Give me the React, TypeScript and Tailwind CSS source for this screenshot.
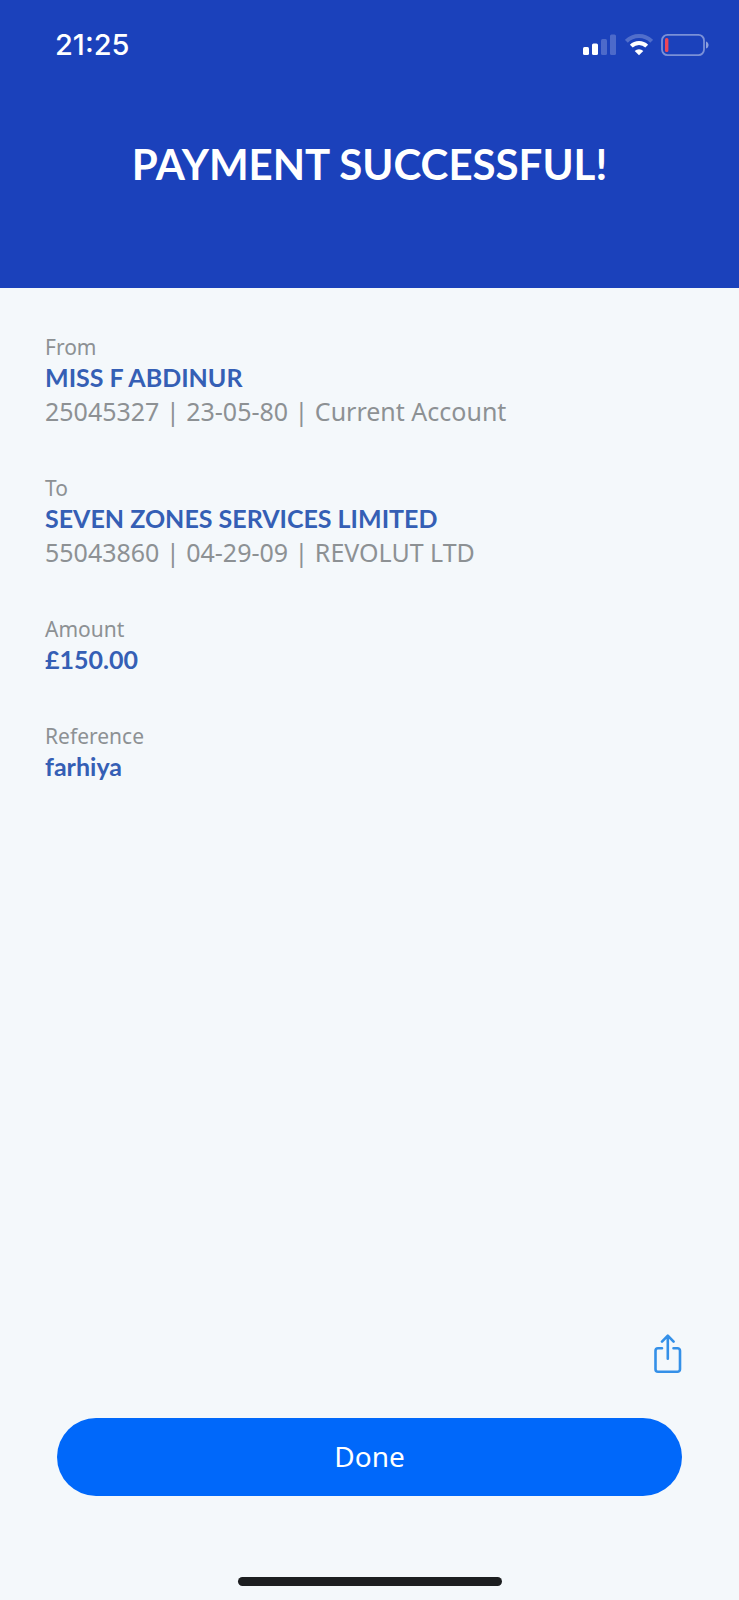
type Entry = { label: string; value: string; detail?: string };

const entries: Entry[] = [
  { label: 'From', value: 'MISS F ABDINUR', detail: '25045327 | 23-05-80 | Current Account' },
  { label: 'To', value: 'SEVEN ZONES SERVICES LIMITED', detail: '55043860 | 04-29-09 | REVOLUT LTD' },
  { label: 'Amount', value: '£150.00' },
  { label: 'Reference', value: 'farhiya' },
];

function SignalIcon() {
  return (
    <svg width="34" height="22" viewBox="0 0 34 22" fill="#fff" aria-hidden="true">
      <rect x="0" y="13" width="6" height="8" rx="1.5" />
      <rect x="9" y="9.5" width="6" height="11.5" rx="1.5" />
      <rect x="18" y="5" width="6" height="16" rx="1.5" opacity=".22" />
      <rect x="27" y="0.5" width="6" height="20.5" rx="1.5" opacity=".22" />
    </svg>
  );
}

function WifiIcon() {
  return (
    <svg width="28" height="22" viewBox="0 0 28 22" fill="none" stroke="#fff" strokeWidth="4" aria-hidden="true">
      <path d="M1.4 7.3a17.8 17.8 0 0 1 25.2 0" opacity=".24" />
      <path d="M6.3 12.2a10.9 10.9 0 0 1 15.4 0" />
      <path d="M14 21.2l-4.3-4.3a6.1 6.1 0 0 1 8.6 0z" fill="#fff" stroke="none" />
    </svg>
  );
}

function BatteryIcon() {
  return (
    <svg width="48" height="22" viewBox="0 0 48 22" aria-hidden="true">
      <rect x="1" y="0.9" width="42" height="20.2" rx="5.5" fill="none" stroke="#fff" strokeWidth="1.8" opacity=".42" />
      <path d="M45 7.5c3.4 1 3.4 6 0 7z" fill="#fff" opacity=".5" />
      <rect x="4" y="4" width="3.4" height="14" rx="1.5" fill="#ee4657" />
    </svg>
  );
}

function ShareIcon() {
  return (
    <svg width="28" height="40" viewBox="0 0 28 40" fill="none" stroke="#3490e8" strokeWidth="2.6" strokeLinecap="round" strokeLinejoin="round" aria-hidden="true">
      <path d="M8 14.2H4A2.5 2.5 0 0 0 1.5 16.7V35.3A2.5 2.5 0 0 0 4 37.8H23.5A2.5 2.5 0 0 0 26 35.3V16.7A2.5 2.5 0 0 0 23.5 14.2H19.5" />
      <path d="M13.8 24.8V1.8M8 7.6l5.8-6 5.8 6" />
    </svg>
  );
}

export default function App() {
  return (
    <div className="flex min-h-screen flex-col bg-[#f4f8fb] font-['Lato',sans-serif]">
      <header className="bg-[#1b41bb] pb-[97px] text-white">
        <div className="flex h-[89px] items-center justify-between pr-[30px] pl-[55px]">
          <time className="font-['Inter',sans-serif] text-[29px] leading-9 font-medium">21:25</time>
          <div className="flex items-center gap-2">
            <SignalIcon />
            <WifiIcon />
            <BatteryIcon />
          </div>
        </div>
        <h1 className="pt-12 text-center text-[42px] leading-[54px] font-bold">PAYMENT SUCCESSFUL!</h1>
      </header>

      <main className="flex flex-1 flex-col">
        <dl className="flex flex-col gap-[47px] px-[45px] pt-[46px]">
          {entries.map((entry) => (
            <div key={entry.label}>
              <dt className="font-['Noto_Sans',sans-serif] text-[21px] leading-[26px] text-[#8d9194]">{entry.label}</dt>
              <dd className="text-[25px] leading-[34px] font-bold text-[#355fb5]">{entry.value}</dd>
              {entry.detail && (
                <dd className="font-['Noto_Sans',sans-serif] text-[25px] leading-[34px] text-[#8d9194]">
                  {entry.detail}
                </dd>
              )}
            </div>
          ))}
        </dl>

        <div className="mt-auto flex flex-col px-[57px]">
          <button type="button" aria-label="Share" className="mb-11 self-end">
            <ShareIcon />
          </button>
          <button type="button" className="h-[78px] rounded-full bg-[#0068fa] pb-0.5 font-['Noto_Sans',sans-serif] text-[28px] text-white">
            Done
          </button>
        </div>
        <div className="mx-auto mt-[81px] mb-[14px] h-[9px] w-[264px] rounded-full bg-[#1c1e20]" />
      </main>
    </div>
  );
}
